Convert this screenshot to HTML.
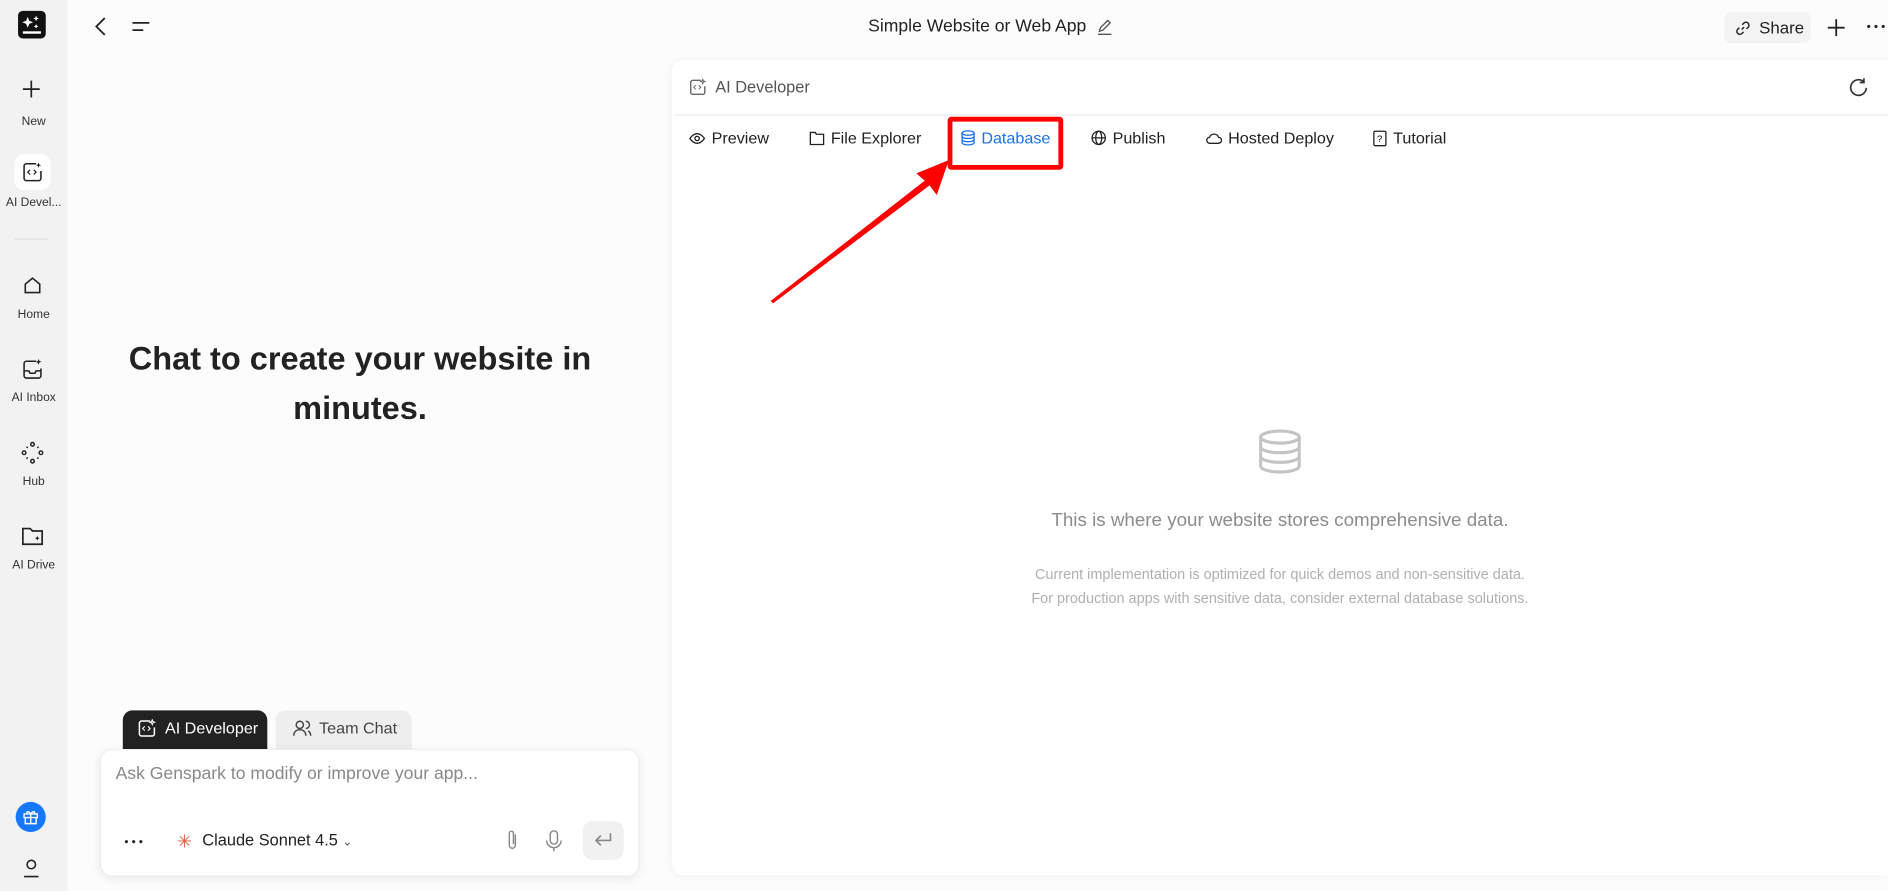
<!DOCTYPE html>
<html><head><meta charset="utf-8"><style>
html,body{margin:0;padding:0;width:1888px;height:891px;overflow:hidden;background:#fcfcfc;font-family:"Liberation Sans",sans-serif;}
#w{position:absolute;left:0;top:0;width:1568px;height:740px;transform:scale(1.20408);transform-origin:0 0;}
.a{position:absolute}
.sb{left:0;top:0;width:56px;height:740px;background:#f2f2f2}
.sl{position:absolute;width:56px;text-align:center;font-size:10px;color:#333}
.ic{position:absolute;left:16px}
.tab{position:absolute;top:107px;font-size:13.4px;color:#222;display:flex;align-items:center;gap:5px}
svg{display:block}
</style></head><body><div id="w">
<div class="a sb">
 <div class="a" style="left:15px;top:9px;width:23px;height:23px;background:#111;border-radius:4px"><svg width="23" height="23" viewBox="0 0 23 23"><path d="M8 5l1.3 3.2 3.2 1.3-3.2 1.3L8 14l-1.3-3.2L3.5 9.5l3.2-1.3z M15 4l.7 1.6 1.6.7-1.6.7L15 8.6l-.7-1.6-1.6-.7 1.6-.7z M15 11l.6 1.3 1.3.6-1.3.6-.6 1.3-.6-1.3-1.3-.6 1.3-.6z" fill="#fff"/><rect x="4" y="17" width="15" height="2" fill="#fff"/></svg></div>
 <svg class="ic" style="top:66px" width="20" height="16" viewBox="0 0 20 16"><path d="M10 1v14M3 8h14" stroke="#222" stroke-width="1.4"/></svg>
 <div class="sl" style="top:96px">New</div>
 <div class="a" style="left:12px;top:128px;width:30px;height:30px;background:#fff;border-radius:8px"></div>
 <svg class="ic" style="top:134px;left:18px" width="18" height="18" viewBox="0 0 18 18"><path d="M12 2H4a2 2 0 0 0-2 2v10a2 2 0 0 0 2 2h10a2 2 0 0 0 2-2V8" fill="none" stroke="#222" stroke-width="1.3"/><path d="M14 1l.6 1.6 1.6.6-1.6.6-.6 1.6-.6-1.6-1.6-.6 1.6-.6z" fill="#222"/><path d="M7 7l-2 2 2 2M10 7l2 2-2 2" fill="none" stroke="#222" stroke-width="1"/></svg>
 <div class="sl" style="top:163px">AI Devel...</div>
 <div class="a" style="left:12px;top:198px;width:28px;height:1px;background:#ddd"></div>
 <svg class="ic" style="top:228px;left:18px" width="18" height="18" viewBox="0 0 18 18"><path d="M3 8l6-5 6 5v7H3z" fill="none" stroke="#222" stroke-width="1.3"/></svg>
 <div class="sl" style="top:256px">Home</div>
 <svg class="ic" style="top:297px;left:17px" width="20" height="20" viewBox="0 0 20 20"><path d="M13 3H5a2 2 0 0 0-2 2v10a2 2 0 0 0 2 2h10a2 2 0 0 0 2-2V9M3 11h4l1 2h4l1-2h4" fill="none" stroke="#222" stroke-width="1.3"/><path d="M15 1l.7 1.7 1.7.7-1.7.7L15 6l-.7-1.7-1.7-.7 1.7-.7z" fill="#222"/></svg>
 <div class="sl" style="top:325px">AI Inbox</div>
 <svg class="ic" style="top:366px;left:17px" width="20" height="20" viewBox="0 0 20 20"><g fill="none" stroke="#222" stroke-width="1.2"><circle cx="10" cy="3" r="1.5"/><circle cx="10" cy="17" r="1.5"/><circle cx="3" cy="10" r="1.5"/><circle cx="17" cy="10" r="1.5"/><path d="M5 5l1 1M15 5l-1 1M5 15l1-1M15 15l-1-1"/></g></svg>
 <div class="sl" style="top:395px">Hub</div>
 <svg class="ic" style="top:436px;left:17px" width="20" height="18" viewBox="0 0 20 18"><path d="M2 3h6l2 2h8v11H2z" fill="none" stroke="#222" stroke-width="1.4"/><path d="M14 9l.6 1.4 1.4.6-1.4.6-.6 1.4-.6-1.4-1.4-.6 1.4-.6z" fill="#222"/></svg>
 <div class="sl" style="top:464px">AI Drive</div>
 <div class="a" style="left:13px;top:666px;width:25px;height:25px;border-radius:50%;background:#1677ff"><svg width="25" height="25" viewBox="0 0 25 25"><path d="M7 10h11v3H7zM8 13h9v5H8zM12.5 10v8M12.5 10c-2-3-4-2-3 0M12.5 10c2-3 4-2 3 0" fill="none" stroke="#fff" stroke-width="1.2"/></svg></div>
 <svg class="ic" style="top:712px;left:18px" width="16" height="18" viewBox="0 0 16 18"><circle cx="8" cy="6" r="3.5" fill="none" stroke="#222" stroke-width="1.3"/><path d="M2 16h12" stroke="#222" stroke-width="1.4"/></svg>
</div>
<svg class="a" style="left:76px;top:13px" width="16" height="18" viewBox="0 0 16 18"><path d="M11 2L4 9l7 7" fill="none" stroke="#222" stroke-width="1.5"/></svg>
<svg class="a" style="left:108px;top:15px" width="18" height="14" viewBox="0 0 18 14"><path d="M2 4h14M2 10h9" stroke="#222" stroke-width="1.5"/></svg>
<div class="a" style="left:721px;top:14px;font-size:14.6px;color:#222">Simple Website or Web App</div>
<svg class="a" style="left:910px;top:15px" width="15" height="15" viewBox="0 0 15 15"><path d="M3 11l1-3 6-6 2 2-6 6zM2 13.5h11" fill="none" stroke="#555" stroke-width="1.1"/></svg>
<div class="a" style="left:1432px;top:10px;width:72px;height:26px;background:#f3f3f3;border-radius:6px;font-size:14px;color:#222;line-height:26px"><svg class="a" style="left:9px;top:7px" width="13" height="13" viewBox="0 0 13 13"><path d="M5.5 7.5l2-2M6 3.5l1.5-1.5a2.5 2.5 0 0 1 3.5 3.5L9.5 7M7 9.5L5.5 11A2.5 2.5 0 0 1 2 7.5L3.5 6" fill="none" stroke="#222" stroke-width="1.2"/></svg><span style="position:absolute;left:29px">Share</span></div>
<svg class="a" style="left:1516px;top:14px" width="18" height="18" viewBox="0 0 18 18"><path d="M9 2v14M2 9h14" stroke="#222" stroke-width="1.5"/></svg>
<svg class="a" style="left:1550px;top:20px" width="16" height="4" viewBox="0 0 16 4"><circle cx="2" cy="2" r="1.3" fill="#222"/><circle cx="8" cy="2" r="1.3" fill="#222"/><circle cx="14" cy="2" r="1.3" fill="#222"/></svg>

<div class="a" style="left:89px;top:278px;width:420px;text-align:center;font-size:27px;font-weight:bold;color:#222;line-height:41px">Chat to create your website in minutes.</div>

<div class="a" style="left:102px;top:590px;width:120px;height:32px;background:#222;border-radius:8px 8px 0 0;color:#fff;font-size:13.4px;line-height:30px"><svg class="a" style="left:12px;top:7px" width="16" height="16" viewBox="0 0 18 18"><path d="M12 2H4a2 2 0 0 0-2 2v10a2 2 0 0 0 2 2h10a2 2 0 0 0 2-2V8" fill="none" stroke="#fff" stroke-width="1.4"/><path d="M14 1l.6 1.6 1.6.6-1.6.6-.6 1.6-.6-1.6-1.6-.6 1.6-.6zM7 7l-2 2 2 2M10 7l2 2-2 2" fill="none" stroke="#fff"/></svg><span style="position:absolute;left:35px">AI Developer</span></div>
<div class="a" style="left:229px;top:590px;width:113px;height:32px;background:#eeeeee;border-radius:8px 8px 0 0;color:#444;font-size:13.4px;line-height:30px"><svg class="a" style="left:14px;top:7px" width="16" height="16" viewBox="0 0 16 16"><g fill="none" stroke="#444" stroke-width="1.2"><circle cx="6" cy="5" r="3"/><path d="M1 14c0-3 2-5 5-5s5 2 5 5M11 2a3 3 0 0 1 0 6M13 10c1.5 1 2 2.5 2 4"/></g></svg><span style="position:absolute;left:36px">Team Chat</span></div>
<div class="a" style="left:83px;top:622px;width:446px;height:104px;background:#fff;border-radius:10px;box-shadow:0 2px 8px rgba(0,0,0,.08);border:1px solid #eee"></div>
<div class="a" style="left:96px;top:635px;font-size:14.6px;color:#888">Ask Genspark to modify or improve your app...</div>
<svg class="a" style="left:103px;top:697px" width="16" height="4" viewBox="0 0 16 4"><circle cx="2" cy="2" r="1.3" fill="#222"/><circle cx="8" cy="2" r="1.3" fill="#222"/><circle cx="14" cy="2" r="1.3" fill="#222"/></svg>
<div class="a" style="left:147px;top:690px;font-size:15px;color:#e05a3a">✳</div>
<div class="a" style="left:168px;top:690px;font-size:13.6px;color:#222">Claude Sonnet 4.5 <span style="font-size:10px;color:#555">⌄</span></div>
<svg class="a" style="left:419px;top:688px" width="14" height="20" viewBox="0 0 14 20"><path d="M9 5v9a2.5 2.5 0 0 1-5 0V4a1.7 1.7 0 0 1 3.4 0v9" fill="none" stroke="#888" stroke-width="1.2"/></svg>
<svg class="a" style="left:452px;top:688px" width="16" height="20" viewBox="0 0 16 20"><rect x="5" y="2" width="6" height="11" rx="3" fill="none" stroke="#888" stroke-width="1.2"/><path d="M2 10a6 6 0 0 0 12 0M8 16v3" fill="none" stroke="#888" stroke-width="1.2"/></svg>
<div class="a" style="left:484px;top:682px;width:34px;height:32px;background:#f1f1f1;border-radius:8px"><svg style="margin:8px 0 0 8px" width="18" height="16" viewBox="0 0 18 16"><path d="M15 2v6H3M7 4L3 8l4 4" fill="none" stroke="#888" stroke-width="1.4"/></svg></div>

<div class="a" style="left:558px;top:50px;width:1010px;height:677px;background:#fff;border-radius:10px 0 0 10px;box-shadow:0 0 6px rgba(0,0,0,.06)"></div>
<svg class="a" style="left:572px;top:65px" width="15" height="15" viewBox="0 0 18 18"><path d="M12 2H4a2 2 0 0 0-2 2v10a2 2 0 0 0 2 2h10a2 2 0 0 0 2-2V8" fill="none" stroke="#666" stroke-width="1.4"/><path d="M14 1l.6 1.6 1.6.6-1.6.6-.6 1.6-.6-1.6-1.6-.6 1.6-.6zM7 7l-2 2 2 2M10 7l2 2-2 2" fill="none" stroke="#666"/></svg>
<div class="a" style="left:594px;top:65px;font-size:13.6px;color:#555">AI Developer</div>
<svg class="a" style="left:1535px;top:64px" width="18" height="18" viewBox="0 0 18 18"><path d="M13 4a6.5 6.5 0 1 0 2 5M13 1v3.5h-3.5" fill="none" stroke="#333" stroke-width="1.4"/></svg>
<div class="a" style="left:560px;top:95px;width:1008px;height:1px;background:#e8e8e8"></div>

<div class="tab" style="left:572px"><svg width="14" height="12" viewBox="0 0 14 12"><path d="M1 6s2.5-4 6-4 6 4 6 4-2.5 4-6 4-6-4-6-4z" fill="none" stroke="#222" stroke-width="1.1"/><circle cx="7" cy="6" r="1.8" fill="none" stroke="#222" stroke-width="1.1"/></svg>Preview</div>
<div class="tab" style="left:672px"><svg width="13" height="13" viewBox="0 0 13 13"><path d="M1 2h4l1 1.5h6V12H1z" fill="none" stroke="#222" stroke-width="1.1"/></svg>File Explorer</div>
<div class="tab" style="left:798px;color:#1a73e8"><svg width="12" height="13" viewBox="0 0 12 13"><g fill="none" stroke="#1a73e8" stroke-width="1.1"><ellipse cx="6" cy="2.5" rx="5" ry="1.8"/><path d="M1 2.5v8c0 1 2.2 1.8 5 1.8s5-.8 5-1.8v-8M1 5.2c0 1 2.2 1.8 5 1.8s5-.8 5-1.8M1 7.9c0 1 2.2 1.8 5 1.8s5-.8 5-1.8"/></g></svg>Database</div>
<div class="tab" style="left:906px"><svg width="13" height="13" viewBox="0 0 13 13"><g fill="none" stroke="#222" stroke-width="1.1"><circle cx="6.5" cy="6.5" r="5.5"/><ellipse cx="6.5" cy="6.5" rx="2.5" ry="5.5"/><path d="M1 6.5h11"/></g></svg>Publish</div>
<div class="tab" style="left:1001px"><svg width="14" height="11" viewBox="0 0 14 11"><path d="M4 10h7a2.5 2.5 0 0 0 0-5 4 4 0 0 0-7.5 0A2.5 2.5 0 0 0 4 10z" fill="none" stroke="#222" stroke-width="1.1"/></svg>Hosted Deploy</div>
<div class="tab" style="left:1140px"><svg width="12" height="14" viewBox="0 0 12 14"><rect x="1" y="1" width="10" height="12" rx="1" fill="none" stroke="#222" stroke-width="1.1"/><text x="3.5" y="10" font-size="8" font-family="Liberation Sans">?</text></svg>Tutorial</div>

<div class="a" style="left:787px;top:97px;width:88px;height:36px;border:4px solid #f00;border-radius:3px"></div>
<svg class="a" style="left:630px;top:120px" width="170" height="140" viewBox="0 0 170 140"><polygon points="158,13 148,42 142,34 12,132 10,130 138,30 131,24" fill="#f00"/></svg>

<svg class="a" style="left:1044px;top:356px" width="38" height="38" viewBox="0 0 38 38"><g fill="none" stroke="#c4c4c4" stroke-width="2.6"><ellipse cx="19" cy="7" rx="16" ry="5"/><path d="M3 7v24c0 2.8 7 5 16 5s16-2.2 16-5V7M3 15c0 2.8 7 5 16 5s16-2.2 16-5M3 23c0 2.8 7 5 16 5s16-2.2 16-5"/></g></svg>
<div class="a" style="left:758px;top:424px;width:610px;text-align:center;font-size:15.6px;color:#8c8c8c">This is where your website stores comprehensive data.</div>
<div class="a" style="left:843px;top:467px;width:440px;text-align:center;font-size:12px;color:#b0b0b0;line-height:20px">Current implementation is optimized for quick demos and non-sensitive data.<br>For production apps with sensitive data, consider external database solutions.</div>
</div></body></html>
